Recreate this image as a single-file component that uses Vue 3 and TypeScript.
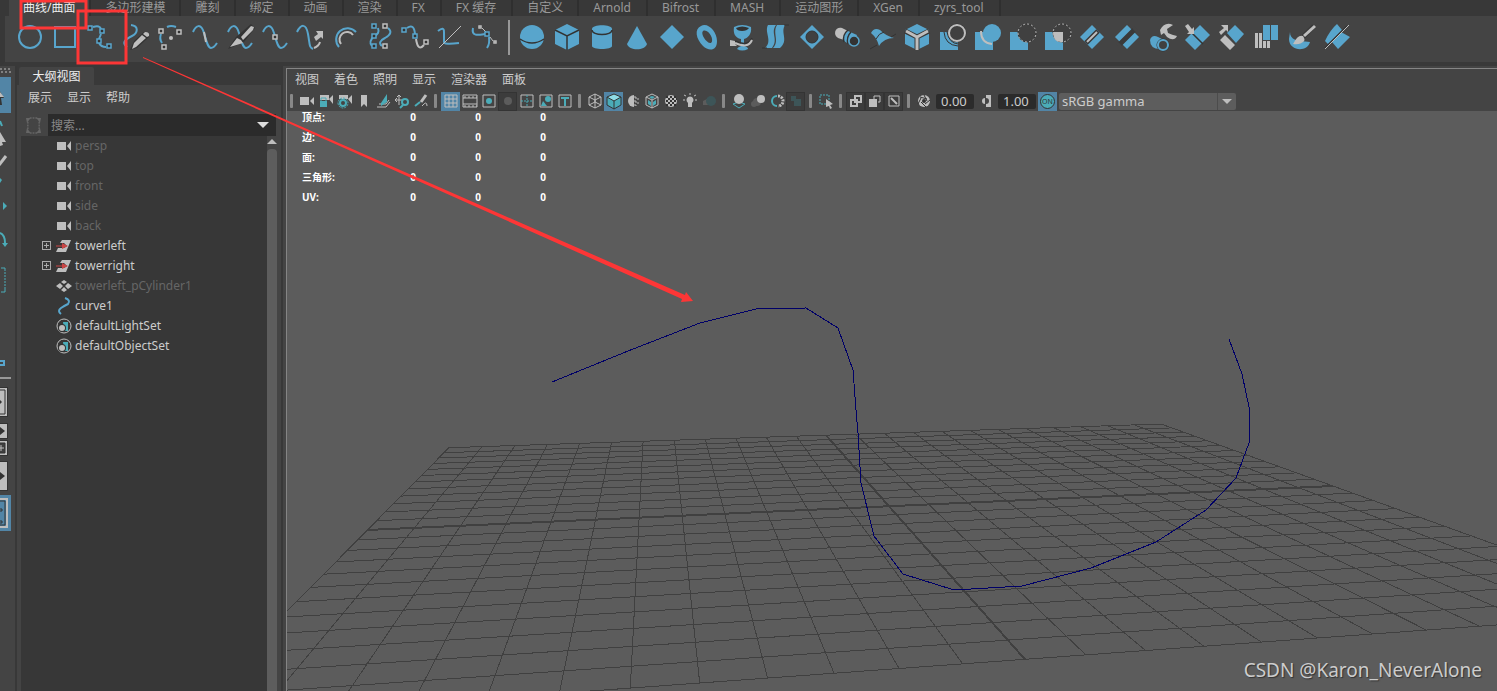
<script setup lang="ts">
import { ref } from 'vue'

type Shape = [paint: string, d: string]
interface Tool { name: string; shapes: Shape[] }

const circle = (x: number, y: number, r: number) =>
  `M${x - r},${y}a${r},${r} 0 1,0 ${2 * r},0a${r},${r} 0 1,0 ${-2 * r},0z`
const box = (x: number, y: number, s = 2) => `M${x - s},${y - s}h${2 * s}v${2 * s}h${-2 * s}z`

const tabs = ['曲线/曲面', '多边形建模', '雕刻', '绑定', '动画', '渲染', 'FX', 'FX 缓存', '自定义', 'Arnold', 'Bifrost', 'MASH', '运动图形', 'XGen', 'zyrs_tool']
const activeTab = ref(0)

const wave = 'M-12,-5C-9,-12 -4,-14 -1,-4S3,11 6,11S10,9 12,6'

const curveTools: Tool[] = [
  { name: '圆形', shapes: [['b', circle(0, 0, 11)]] },
  { name: '方形', shapes: [['b', 'M-10,-10H10V10H-10z']] },
  { name: 'CV 曲线', shapes: [['b', 'M-7,-10Q0,-12 1,-8M1,-3L-1,2M-1,6Q1,10 6,10'], ['bk', box(-10, -9)], ['bk', box(2, -6)], ['bk', box(-1, 4)], ['bk', box(9, 9)]] },
  { name: '铅笔曲线', shapes: [['b', 'M-4,-12C4,-11 3,-4 -3,-1S-14,5 -8,10'], ['K', 'M-5,13L-1,4L9,-5L14,-3L14,0L2,11z'], ['G', 'M-3,12L-1,6L7,-2L11,1L1,10zM8,-3L10,-5Q15,-5 14,-1L12,0z']] },
  { name: '三点圆弧', shapes: [['b', 'M-8,6Q-11,2 -9,-3M-3,-10Q1,-12 6,-10'], ['gk', box(-9, -6)], ['gk', box(9, -5)], ['gk', box(-6, 10)], ['G', circle(1, 1, 2)]] },
  { name: '附加曲线', shapes: [['b', wave], ['g', 'M-1,-5L1,5']] },
  { name: '切割曲线', shapes: [['b', wave], ['K', 'M-12,12L-4,0L11,-13L15,-9L4,5z'], ['G', 'M-10,10L-3,1L1,3L3,6zM1,0L11,-11L14,-10L13,-7L3,3z']] },
  { name: '插入结', shapes: [['b', wave], ['gk', box(0, 0)]] },
  { name: '延伸曲线', shapes: [['b', 'M-13,-5C-9,-13 -4,-14 -2,-3S-1,10 3,12'], ['g', 'M4,11Q9,9 10,5'], ['G', 'M4,0L8,-3L6,-6L13,-6V2L11,0L6,4z']] },
  { name: '偏移曲线', shapes: [['b', 'M11,-5A11,11 0 1,0 -6,10'], ['g', 'M8,-2A7,7 0 1,0 -4,7']] },
  { name: '重建曲线', shapes: [['b', 'M-2,-9Q0,-3 -6,-1Q-12,5 -8,9M8,-9Q14,-4 5,1Q-3,5 2,9'], ['bk', box(-6, -11)], ['bk', box(-6, -1)], ['bk', box(-6, 9)], ['gk', box(5, -11)], ['gk', box(5, 9)]] },
  { name: '添加点', shapes: [['b', 'M-8,-9Q-1,-14 0,-3'], ['g', 'M1,2Q3,15 9,8'], ['bk', box(-11, -7)], ['bk', box(0, -1)], ['gk', box(11, 5)]] },
  { name: '曲线编辑', shapes: [['b', 'M-12,-6Q-6,-11 -6,-5V5Q-6,8 9,6'], ['g1', 'M11,-11L-11,11']] },
  { name: '曲线 CV', shapes: [['b', 'M-12,-9C-14,0 -6,-2 0,-3M4,0Q5,7 2,11'], ['g1', 'M-3,-9L1,-5M5,0L8,4'], ['bk', box(2, -3)], ['gk', box(-5, -10, 1)], ['gk', box(10, 5, 1)]] },
]

const dia = 'M0,-12L12,0L0,12L-12,0z'
const surfaceTools: Tool[] = [
  { name: '球体', shapes: [['B', circle(0, 0, 12)], ['k', 'M-12,2Q0,10 12,2']] },
  { name: '立方体', shapes: [['B', 'M0,-13L12,-7V7L0,13L-12,7V-7z'], ['k', 'M-12,-7L0,-1L12,-7M0,-1V13']] },
  { name: '圆柱体', shapes: [['B', 'M-10,-8C-10,-13 10,-13 10,-8V9C10,13 -10,13 -10,9z'], ['k', 'M-10,-7C-10,-1 10,-1 10,-7']] },
  { name: '圆锥体', shapes: [['B', 'M0,-11L10,7C8,14 -8,14 -10,7z']] },
  { name: '平面', shapes: [['B', dia]] },
  { name: '圆环', shapes: [['B', 'M-6,-11C1,-15 10,-5 10,4C10,15 1,14 -4,9C-11,2 -13,-8 -6,-11zM-4,-6C-7,-3 0,7 4,6C8,3 1,-9 -4,-6z']] },
  { name: '旋转', shapes: [['B', 'M-8,-10Q0,-14 9,-10C10,-3 6,1 2,2V9Q6,10 6,12Q0,15 -5,12Q-4,10 -1,9V2C-7,1 -9,-4 -8,-10z'], ['K', 'M-6,-9Q0,-12 7,-9Q5,-6 0,-6T-6,-9z'], ['k', 'M-7,4Q6,10 10,1'], ['g', 'M-7,6Q6,12 10,3'], ['G', 'M-12,3V9L-5,9L-7,7V4z']] },
  { name: '放样', shapes: [['B', 'M-9,-12H-1C-7,-4 2,2 -5,11H-12C-4,4 -13,-5 -9,-12zM0,-12H8C3,-4 12,3 3,11H-4C3,4 -5,-4 0,-12z'], ['k1', 'M-15,11H-10M7,-12H12']] },
  { name: '平面修剪', shapes: [['B', dia], ['kk', circle(0, 0, 6)]] },
  { name: '挤出', shapes: [['G', 'M-5,-9L1,-6L-3,3L-9,1C-15,-3 -11,-11 -5,-9z'], ['B', 'M1,-6L10,-2L5,9L-3,4Q-5,-2 1,-6z'], ['k', 'M1,-7Q-5,-2 -3,5M4,-5Q-1,0 1,7'], ['bk', circle(7, 4, 5)]] },
  { name: '双轨成形', shapes: [['B', 'M-11,-4Q-8,-10 -2,-7Q4,-1 12,1Q2,1 -3,9Q-5,1 -11,-4z'], ['k1', 'M-6,2Q-3,-4 2,-5M-12,12L-5,8M9,0L14,-3']] },
  { name: '边界', shapes: [['B', 'M0,-13L12,-7V7L0,13L-12,7V-7z'], ['k4', 'M-12,-6L0,0L12,-6M0,0V13'], ['g3', 'M-11,-6L0,0L11,-6M0,0V13']] },
  { name: '相交', shapes: [['B', 'M-12,-5H-3Q-1,5 6,5V13H-12z'], ['k1', 'M-8,-5Q-7,8 6,9'], ['k1', 'M-5,-5Q-3,6 6,7'], ['kk', circle(5, -4, 9)], ['g', circle(5, -4, 8)]] },
  { name: '布尔并集', shapes: [['B', 'M-12,-5H6V13H-12z'], ['g', 'M-6,-6Q-6,6 5,7'], ['B', circle(5, -4, 9)]] },
  { name: '布尔差集', shapes: [['B', 'M-12,-5H6V13H-12z'], ['kk', circle(5, -4, 9)], ['gd', circle(5, -4, 9)]] },
  { name: '布尔交集', shapes: [['B', 'M-12,-5H6V13H-12z'], ['kk', circle(5, -4, 9)], ['G', 'M-4,-5H6V5Q-4,6 -4,-5z'], ['gd', circle(5, -4, 9)]] },
  { name: '附加曲面', shapes: [['B', dia], ['k4', 'M6,-6L-6,6'], ['g', 'M5,-5L-5,5']] },
  { name: '分离曲面', shapes: [['B', dia], ['k4', 'M7,-7L-7,7'], ['c', 'M9,-9L7,-7M-9,9L-7,7']] },
  { name: '圆角', shapes: [['G', 'M-2,-7Q3,-16 11,-12L5,-8L6,-4Q10,-2 15,-1Q12,5 5,0L2,-4L-1,-2z'], ['B', 'M-12,3Q-10,-3 -4,0L2,3L-2,12Q-12,12 -12,3z'], ['kk', circle(1, 8, 6)], ['b', circle(1, 8, 5)]] },
  { name: '插入等参线', shapes: [['B', 'M3,-12L13,-2L-2,13L-12,3z'], ['k', 'M-5,-4L6,7'], ['G', 'M-12,-11L-9,-13L-5,-8L-3,-10V-3H-10L-8,-5z']] },
  { name: '延伸曲面', shapes: [['B', 'M3,-12L12,-3L4,6L-5,-4z'], ['G', 'M-7,-2L3,8L-2,13L-12,3zM-13,-5L-8,-9L-11,-12H-4V-5L-6,-7L-11,-2z']] },
  { name: '重建曲面', shapes: [['B', 'M-4,-12H3V3H-4zM4,-12H11V3H4z'], ['G', 'M-12,-4H-9V11H-12zM-8,-4H-5V11H-8zM-4,4H-1V11H-4zM0,4H3V11H0z']] },
  { name: '雕刻曲面', shapes: [['B', 'M-12,-5C-12,3 -5,4 8,5C5,16 -13,14 -13,2z'], ['k4', 'M-4,5L12,-11'], ['g3', 'M2,-1L13,-11'], ['G', 'M-9,7Q-4,-3 1,-1Q4,3 1,5Q-2,8 -9,7z']] },
  { name: '曲面编辑', shapes: [['B', 'M0,-13L5,-7L-9,7L-12,4Q-7,-7 0,-13zM7,-7L4,-5L13,0L1,12L-5,5L7,-7z'], ['k', 'M10,-11L-12,11'], ['g1', 'M12,-12L-12,12']] },
]

const cube = 'M0,-7L6,-4V4L0,7L-6,4V-4zM-6,-4L0,-1L6,-4M0,-1V7'
interface ViewTool extends Tool { on?: boolean; framed?: boolean }
const viewGroups: ViewTool[][] = [
  [
    { name: '选择摄影机', shapes: [['G', 'M-7,-4H2V4H-7zM3,0L7,-4V4z']] },
    { name: '锁定摄影机', shapes: [['G', 'M-6,-6H3V-1H-6zM3,-2L7,-6V3z'], ['T', 'M-6,0H1V6H-6z'], ['t1', 'M-5,0V-3H0V0']] },
    { name: '摄影机属性', shapes: [['G', 'M-6,-6H3V-2H-6zM3,-2L7,-6V3z'], ['tk', circle(-2, 2, 3)], ['td', circle(-2, 2, 5)]] },
    { name: '书签', shapes: [['G', 'M-3,-6H3V6L0,3L-3,6z']] },
    { name: '图像平面', shapes: [['g1', 'M-6,6H3L7,1M-4,3H3L6,-1'], ['T', 'M-2,2L4,-7V1L-2,5z']] },
    { name: '二维平移', shapes: [['g1', 'M-7,-1H1M-3,-6V4M-5,-4L-3,-6L-1,-4M-5,-3L-7,-1L-5,1'], ['tk', circle(3, 1, 3)], ['t', 'M1,4L-2,7']] },
    { name: '油性铅笔', shapes: [['g3', 'M5,-6L0,1'], ['t', 'M-6,5L-1,1'], ['g1', 'M1,5Q6,-1 6,5']] },
  ],
  [
    { name: '栅格', on: true, shapes: [['g1', 'M-6,-6H6V6H-6zM-6,-2H6M-6,2H6M-2,-6V6M2,-6V6']] },
    { name: '胶片门', shapes: [['g1', 'M-7,-6H7V6H-7zM-7,-3H7M-7,3H7'], ['gd', 'M-6,-4H7M-6,5H7']] },
    { name: '分辨率门', shapes: [['g1', 'M-6,-6H6V6H-6z'], ['T', circle(0, 0, 3)]] },
    { name: '门遮罩', framed: true, shapes: [['D', circle(0, 0, 4)]] },
    { name: '区域图', shapes: [['g1', 'M-6,-6H6V6H-6z'], ['td', 'M-6,0H6M0,-6V6']] },
    { name: '安全动作', shapes: [['g1', 'M-6,-6H6V6H-6z'], ['T', circle(2, -2, 3)], ['T', 'M-5,5L-3,0L1,5z']] },
    { name: '安全标题', shapes: [['g1', 'M-6,-6H6V6H-6z'], ['t', 'M-4,-3H4M0,-3V5']] },
  ],
  [
    { name: '线框', shapes: [['g1', cube], ['g1', 'M-6,4L0,1L6,4M0,-7V1']] },
    { name: '着色显示', on: true, shapes: [['T', 'M0,-7L7,-4V4L0,8L-7,4V-4z'], ['P', 'M0,-7L7,-4L0,0L-7,-4z'], ['k1', 'M-7,-4L0,0L7,-4L0,-7zV4L0,8L7,4V-4M0,0V8']] },
    { name: '默认材质', shapes: [['G', 'M1,-6A6,6 0 0,0 1,6z'], ['gd', 'M2,-5V5M5,-3V4M3,-4V5']] },
    { name: '着色线框', shapes: [['g1', cube], ['T', 'M-4,-1L-1,1V5L-4,3zM4,-1L1,1V5L4,3zM-3,-4L0,-5L3,-4L0,-2z']] },
    { name: '纹理', shapes: [['G', circle(0, 0, 6)], ['kd', 'M-5,-4H5M-3,-2H6M-5,0H6M-3,2H5M-5,4H5']] },
    { name: '使用灯光', shapes: [['G', 'M-2,4V2Q-5,-1 -2,-4Q0,-5 2,-4Q5,-1 2,2V6H-2z'], ['g1', 'M0,-8V-6M-7,-1H-5M5,-1H7M-6,-6L-4,-5M6,-6L4,-5']] },
    { name: '阴影', shapes: [['D', 'M-6,0L0,-3V4H-6z'], ['E', circle(2, 0, 5)]] },
  ],
  [
    { name: '环境光遮挡', shapes: [['t1', 'M-6,3L0,7L6,3L0,1z'], ['G', circle(0, -2, 5)]] },
    { name: '运动模糊', shapes: [['D', circle(-4, 3, 3)], ['D', circle(-1, 1, 4)], ['G', circle(3, -2, 4)]] },
    { name: '抗锯齿', shapes: [['t', 'M0,-5A5,5 0 0,0 0,5'], ['gd3', 'M1,-5A5,5 0 0,1 1,5']] },
    { name: '景深', framed: true, shapes: [['E', 'M-5,-5H0V0H-5zM-2,-2H5V5H-2z']] },
  ],
  [{ name: '隔离选择', shapes: [['td', 'M-6,-6H3V3H-6z'], ['G', 'M0,-2L7,3L4,4L6,7L4,8L3,5L0,6z']] }],
  [
    { name: 'X 射线', framed: true, shapes: [['g', 'M-5,-1H1V5H-5zM-1,-5H5V1H-1z']] },
    { name: 'X 射线关节', framed: true, shapes: [['G', 'M-6,-2H2V6H-6z'], ['g1', 'M-1,-2V-5H5V1H3']] },
    { name: '曝光切换', framed: true, shapes: [['g1', 'M-5,-5H5V5H-5z'], ['g', 'M-3,-3L3,3']] },
  ],
]

interface Node { label: string; icon: 'camera' | 'group' | 'mesh' | 'curve' | 'set'; dim?: boolean; open?: boolean }
const nodes: Node[] = [
  ...['persp', 'top', 'front', 'side', 'back'].map((label): Node => ({ label, icon: 'camera', dim: true })),
  { label: 'towerleft', icon: 'group', open: false },
  { label: 'towerright', icon: 'group', open: false },
  { label: 'towerleft_pCylinder1', icon: 'mesh', dim: true },
  { label: 'curve1', icon: 'curve' },
  { label: 'defaultLightSet', icon: 'set' },
  { label: 'defaultObjectSet', icon: 'set' },
]
const nodeIcons: Record<Node['icon'], Shape[]> = {
  camera: [['G', 'M-7,-4H2V4H-7zM3,0L7,-5V5z']],
  group: [['G', 'M-2,-6H7L2,6H-8L-6,2H0L3,0L0,-3H-4z'], ['r', 'M-8,0H0'], ['R', 'M-2,-3L4,0L-2,3z']],
  mesh: [['G', 'M0,-6L3,-4L0,-2L-3,-4zM-4,-3L-1,0L-4,3L-8,0zM4,-3L1,0L4,3L8,0zM0,1L3,4L0,6L-3,4z']],
  curve: [['b', 'M1,-8Q7,-6 4,-2Q0,0 -3,2Q-7,5 -3,8']],
  set: [['g1', circle(0, 0, 7)], ['T', 'M-1,-4H4V5H0z'], ['K', circle(-2, 2, 4)], ['G', circle(-2, 2, 3)]],
}

const stats = ['顶点:', '边:', '面:', '三角形:', 'UV:']
const exposure = ref('0.00')
const gamma = ref('1.00')
const query = ref('')

/* Ground plane: u runs left to right, v runs back to front, both from -1 to 1. */
const project = (u: number, v: number): string => {
  const w = 1 + 0.0803 * u - 0.366 * v
  const x = (889 + 551 * u - 239.2 * v) / w
  const y = (506.2 + 18.8 * u - 88.2 * v) / w
  return `${x.toFixed(1)},${y.toFixed(1)}`
}
const steps = Array.from({ length: 25 }, (_, i) => (i - 12) / 12)
const thinGrid = steps
  .filter((s) => s !== 0)
  .map((s) => `M${project(s, -1)}L${project(s, 1)}M${project(-1, s)}L${project(1, s)}`)
  .join('')
const axes = `M${project(0, -1)}L${project(0, 1)}M${project(-1, 0)}L${project(1, 0)}`
const curve = '552,382 628,351 700,323 756,309 806,308 838,328 853,370 856,410 858,433 861,483 874,536 903,574 954,590 1022,586 1091,568 1156,542 1206,510 1236,478 1249,443 1249,407 1242,374 1229,339'

const sideTools: { name: string; cls: string; shapes: Shape[] }[] = [
  { name: '选择', cls: 'lit', shapes: [['K', 'M-1,13L4,21H1L2,28H-1z'], ['G', 'M0,15L4,20H0z']] },
  { name: '套索', cls: '', shapes: [['t', 'M0,7L2,12'], ['G', 'M0,18L6,28L2,28L3,31L0,32z']] },
  { name: '绘制选择', cls: '', shapes: [['g3', 'M-1,14L6,5'], ['T', 'M0,27L2,29L0,32z']] },
  { name: '移动', cls: '', shapes: [['T', 'M3,14L7,18L3,22z']] },
  { name: '旋转', cls: '', shapes: [['t', 'M0,8Q5,10 5,18'], ['T', 'M2,18H8L5,22z']] },
  { name: '缩放', cls: '', shapes: [['t1', 'M1,6H5V9M5,27V30H1'], ['td', 'M5,10V27']] },
]
</script>

<template>
  <div class="app">
    <header class="shelf">
      <nav class="tabs" aria-label="工具架">
        <button v-for="(t, i) in tabs" :key="t" class="tab" :class="{ active: i === activeTab, latin: /[A-Za-z]/.test(t) }" @click="activeTab = i">{{ t }}</button>
      </nav>
      <div class="tools">
        <button v-for="t in curveTools" :key="t.name" class="tool" :aria-label="t.name">
          <svg viewBox="-17 -17 34 34"><path v-for="(s, i) in t.shapes" :key="i" :class="s[0]" :d="s[1]" /></svg>
        </button>
        <span class="divider"></span>
        <button v-for="t in surfaceTools" :key="t.name" class="tool" :aria-label="t.name">
          <svg viewBox="-17 -17 34 34"><path v-for="(s, i) in t.shapes" :key="i" :class="s[0]" :d="s[1]" /></svg>
        </button>
      </div>
    </header>

    <div class="body">
      <aside class="toolbox">
        <svg class="grip" viewBox="0 0 11 6"><path class="gd" d="M0,1H11M1,4H11" /></svg>
        <button v-for="t in sideTools" :key="t.name" class="side" :class="t.cls" :aria-label="t.name">
          <svg viewBox="0 0 11 36"><path v-for="(s, i) in t.shapes" :key="i" :class="s[0]" :d="s[1]" /></svg>
        </button>
        <button class="side last" aria-label="上次工具">
          <svg viewBox="0 0 11 36"><path class="b" d="M0,17H4V21H0" /></svg>
        </button>
        <hr />
        <div class="layouts">
          <button class="pane tall" aria-label="单个视图"><svg viewBox="0 0 7 28"><path class="k1" d="M0,2H5V26H0" /><path class="K" d="M0,12L2,14L0,16z" /></svg></button>
          <button class="pane" aria-label="前一视图"><svg viewBox="0 0 7 14"><path class="K" d="M0,3L5,7L0,11z" /></svg></button>
          <button class="pane" aria-label="添加视图"><svg viewBox="0 0 7 14"><path class="kk" d="M-1,2H5V12H-1z" /><path class="g1" d="M0,7H4M1,4V10" /></svg></button>
          <button class="pane tall" aria-label="四视图"><svg viewBox="0 0 7 28"><path class="K" d="M0,10L5,14L0,18z" /></svg></button>
        </div>
        <button class="side lit" aria-label="大纲视图开关">
          <svg viewBox="0 0 11 36"><path class="g" d="M-2,4H7V32H-2" /><path class="k1" d="M0,6H5V30H0M0,14H2V16H0M0,26H2V28H0" /></svg>
        </button>
      </aside>

      <section class="outliner">
        <div class="dock"><h2>大纲视图</h2></div>
        <nav class="menu" aria-label="大纲菜单">
          <button>展示</button><button>显示</button><button>帮助</button>
        </nav>
        <div class="search">
          <svg class="target" viewBox="0 0 16 18"><path d="M4,1H12M4,17H12M2,5V13M14,5V13" /><path class="tri" d="M0,1H5L1,6zM11,1H16L15,6zM0,17H5L1,12zM11,17H16L15,12z" /></svg>
          <label class="field">
            <input v-model="query" type="text" placeholder="搜索..." aria-label="搜索" />
            <svg viewBox="0 0 12 6"><path class="W" d="M0,0H12L6,6z" /></svg>
          </label>
        </div>
        <div class="tree">
          <ul>
            <li v-for="n in nodes" :key="n.label" :class="{ dim: n.dim }">
              <button v-if="n.open === false" class="expand" :aria-label="'展开 ' + n.label"><svg viewBox="0 0 9 9"><path d="M0,0H8V8H0zM2,4H7M4,2V7" /></svg></button>
              <svg class="node" viewBox="-9 -9 18 18"><path v-for="(s, i) in nodeIcons[n.icon]" :key="i" :class="s[0]" :d="s[1]" /></svg>
              <span>{{ n.label }}</span>
            </li>
          </ul>
          <div class="scroll">
            <svg viewBox="0 0 10 5"><path class="G" d="M0,5L5,0L10,5z" /></svg>
            <div class="thumb"></div>
          </div>
        </div>
      </section>

      <main class="view">
        <nav class="menu" aria-label="视图菜单">
          <button>视图</button><button>着色</button><button>照明</button><button>显示</button><button>渲染器</button><button>面板</button>
        </nav>
        <div class="bar">
          <template v-for="(g, gi) in viewGroups" :key="gi">
            <span class="sep"></span>
            <button v-for="t in g" :key="t.name" class="mini" :class="{ on: t.on, framed: t.framed }" :aria-label="t.name">
              <svg viewBox="-9 -9 18 18"><path v-for="(s, i) in t.shapes" :key="i" :class="s[0]" :d="s[1]" /></svg>
            </button>
          </template>
          <span class="sep"></span>
          <button class="mini" aria-label="重置曝光"><svg viewBox="-9 -9 18 18"><path class="G" :d="circle(0, 0, 6)" /><path class="k1" d="M0,-6L3,0M6,-1L1,3M2,6L-3,1M-6,3L-3,-3M-4,-4L3,-2" /><path class="K" :d="circle(0, 0, 2)" /></svg></button>
          <input v-model="exposure" class="num" type="text" aria-label="曝光" />
          <button class="mini" aria-label="重置 Gamma"><svg viewBox="-9 -9 18 18"><path class="G" d="M0,-6H5V6H0V3A3,3 0 0,0 0,-3z" /><path class="G" d="M-1,-3A3,3 0 0,0 -1,3z" /></svg></button>
          <input v-model="gamma" class="num" type="text" aria-label="Gamma" />
          <button class="mini on cm" aria-label="颜色管理"><span>ON</span></button>
          <div class="pick">
            <select aria-label="视图变换"><option>sRGB gamma</option></select>
            <svg viewBox="0 0 10 5"><path class="G" d="M0,0H10L5,5z" /></svg>
          </div>
        </div>
        <div class="canvas">
          <svg class="scene" viewBox="287 111 1210 580" preserveAspectRatio="xMinYMin slice">
            <path class="grid" :d="thinGrid" />
            <path class="axis" :d="axes" />
            <polyline class="nurbs" :points="curve" />
          </svg>
          <table class="hud">
            <tbody>
              <tr v-for="s in stats" :key="s"><th scope="row">{{ s }}</th><td>0</td><td>0</td><td>0</td></tr>
            </tbody>
          </table>
          <p class="mark">CSDN @Karon_NeverAlone</p>
        </div>
      </main>
    </div>

    <svg class="notes" width="700" height="310" viewBox="0 0 700 310" aria-hidden="true">
      <path class="frame" d="M21,1H86V28H21zM78,11H126V63H78z" />
      <path class="arrow" d="M143,57L685,295L686,292L693,301L681,302L682,299L143,58z" />
    </svg>
  </div>
</template>

<style>
body { margin: 0; background: #444; }
</style>

<style scoped>
.app { position: relative; display: flex; flex-direction: column; min-height: 100vh; overflow: hidden; background: #444; color: #ccc; font: 12px/16px "Noto Sans", "Noto Sans CJK SC", sans-serif; }
* { box-sizing: border-box; }
button, input, select { font: inherit; color: inherit; border: 0; padding: 0; margin: 0; background: none; }
svg { display: block; }
path { fill: none; }
ul { list-style: none; margin: 0; padding: 0; }

.b, .bk { stroke: #58a5cc; stroke-width: 2; }
.g, .gk { stroke: #bebebe; stroke-width: 2; }
.bk, .gk { fill: #333; stroke-width: 1.5; }
.g1 { stroke: #bebebe; }
.g3 { stroke: #bebebe; stroke-width: 3; }
.gd { stroke: #bebebe; stroke-dasharray: 2 2; }
.gd3 { stroke: #bebebe; stroke-width: 3; stroke-dasharray: 2 1; }
.t, .tk { stroke: #4bacb8; stroke-width: 2; }
.t1 { stroke: #4bacb8; }
.td { stroke: #4bacb8; stroke-dasharray: 2 1; }
.k { stroke: #333; stroke-width: 1.5; }
.k1 { stroke: #333; }
.k4 { stroke: #3a3a3a; stroke-width: 5; }
.kd { stroke: #333; stroke-width: 2; stroke-dasharray: 2 2; }
.kk { fill: #404040; stroke: #333; }
.c { stroke: #444; stroke-width: 4; }
.r { stroke: #c94545; }
.B { fill: #58a5cc; }
.G { fill: #bebebe; }
.T { fill: #4bacb8; }
.P { fill: #8fdce6; }
.K { fill: #333; }
.D { fill: #5c5c5c; }
.E { fill: #3d5558; }
.R { fill: #c94545; }
.W { fill: #ddd; }

.shelf { flex: none; border-left: 5px solid #383838; border-bottom: 4px solid #393939; }
.tabs { display: flex; height: 16px; padding-left: 4px; background: #383838; overflow: hidden; }
.tab { flex: none; height: 16px; padding: 0 14px; border-right: 2px solid #2f2f2f; color: #999; line-height: 16px; white-space: nowrap; }
.tab.latin { padding-right: 15px; }
.tab.active { background: #444; color: #eee; }
.tools { display: flex; align-items: center; height: 46px; padding: 0 0 4px 8px; }
.tool { flex: none; width: 35px; height: 34px; }
.tool svg { width: 34px; height: 34px; }
.divider { flex: none; width: 2px; height: 35px; margin: 0 5px; background: #999; }

.body { display: flex; flex: 1; min-height: 0; }
.toolbox { flex: none; width: 17px; border-right: 2px solid #383838; }
.grip { width: 11px; height: 6px; margin: 2px 0 3px; }
.side { display: block; width: 11px; height: 36px; margin-bottom: 1px; }
.side svg { width: 11px; height: 36px; overflow: hidden; }
.lit { background: #5285a6; }
.last { margin-top: 46px; }
hr { width: 11px; height: 2px; margin: -4px 0 9px; border: 0; background: #999; }
.layouts { display: grid; gap: 3px; }
.pane { width: 7px; height: 14px; background: #bebebe; outline: 1px solid #333; }
.pane.tall { height: 28px; margin-bottom: 5px; }
.pane + .pane.tall { margin-top: 4px; }
.pane svg { width: 100%; height: 100%; }

.outliner { flex: none; display: flex; flex-direction: column; width: 266px; border-right: 2px solid #383838; }
.dock { height: 19px; padding: 1px 0 0 2px; background: #393939; }
h2 { width: 75px; height: 18px; margin: 0; border-radius: 2px 2px 0 0; background: #444; color: #eee; font: inherit; line-height: 20px; text-align: center; }
.menu { display: flex; gap: 15px; }
.outliner .menu { padding: 5px 11px 0; height: 29px; align-items: flex-start; }
.search { display: flex; align-items: center; height: 22px; padding: 0 5px 0 9px; gap: 7px; }
.target { width: 15px; height: 17px; }
.target path { stroke: #777; stroke-dasharray: 2 1; }
.target .tri { fill: #666; stroke: none; }
.field { display: flex; flex: 1; align-items: center; height: 22px; padding: 0 7px 0 3px; background: #2b2b2b; }
.field input { flex: 1; min-width: 0; padding-top: 2px; outline: 0; }
.field input::placeholder { color: #888; opacity: 1; }
.field svg { width: 12px; height: 6px; }
.tree { display: flex; flex: 1; margin-left: 4px; }
.tree ul { flex: 1; background: #373737; }
.tree li { display: flex; align-items: center; height: 20px; padding-left: 34px; color: #ccc; position: relative; }
.tree li.dim { color: #666; }
.node { width: 18px; height: 18px; margin-right: 2px; }
.expand { position: absolute; left: 21px; top: 5px; width: 9px; height: 9px; }
.expand svg { width: 9px; height: 9px; overflow: visible; }
.expand path { stroke: #aaa; shape-rendering: crispEdges; }
.scroll { display: flex; flex-direction: column; width: 14px; padding: 3px 4px 0 0; }
.scroll svg { width: 10px; height: 5px; margin-bottom: 5px; }
.thumb { flex: 1; border-radius: 4px 4px 0 0; background: #5d5d5d; }

.view { display: flex; flex: 1; flex-direction: column; min-width: 0; margin: 2px 0 0 3px; border-left: 1px solid #858585; border-top: 1px solid #858585; }
.view .menu { align-items: flex-start; padding: 3px 8px 0; height: 22px; }
.bar { display: flex; align-items: center; height: 20px; }
.sep { flex: none; width: 3px; height: 14px; margin: 0 4px; border-radius: 1px; background: #888; }
.sep:first-child { margin-left: 3px; }
.mini { flex: none; display: grid; place-items: center; width: 19px; height: 19px; }
.mini svg { width: 18px; height: 18px; }
.on { background: #5285a6; }
.framed { background: #3c3c3c; outline: 1px solid #343434; outline-offset: -1px; }
.num { width: 38px; height: 15px; margin: 0 2px 0 3px; padding: 0 5px; border-radius: 2px; background: #2b2b2b; font-size: 13px; }
.cm span { width: 15px; height: 15px; border-radius: 50%; background: #4bacb8; border: 1px solid #333; color: #333; font-size: 7px; line-height: 13px; text-align: center; }
.pick { display: flex; align-items: center; width: 177px; height: 17px; margin-left: 2px; padding-right: 4px; border-radius: 2px; background: #5d5d5d; }
.pick select { flex: 1; height: 17px; padding: 0 3px; border-right: 1px solid #4c4c4c; margin-right: 4px; appearance: none; font-size: 13px; line-height: 17px; }
.pick svg { width: 10px; height: 5px; }

.canvas { position: relative; flex: 1; overflow: hidden; background: #5c5c5c; }
.scene { position: absolute; inset: 0; width: 100%; height: 100%; }
.scene path, .scene polyline { shape-rendering: crispEdges; fill: none; }
.grid { stroke: #404040; }
.axis { stroke: #404040; stroke-width: 2; }
.nurbs { stroke: #000068; }
.hud { position: absolute; left: 15px; top: 0; border-collapse: collapse; color: #fff; font: bold 10px/12px "Open Sans", "Noto Sans CJK SC", sans-serif; }
.hud th, .hud td { height: 20px; padding: 0 0 8px; vertical-align: top; }
.hud th { width: 49px; text-align: left; white-space: nowrap; }
.hud td { width: 65px; text-align: right; }
.mark { position: absolute; right: 15px; bottom: 8px; margin: 0; color: #ccc; font-size: 19px; line-height: 26px; text-shadow: 1px 1px 1px #333; }

.notes { position: absolute; left: 0; top: 0; pointer-events: none; }
.frame { stroke: #fd3636; stroke-width: 3; }
.arrow { fill: #fd3636; }
</style>
